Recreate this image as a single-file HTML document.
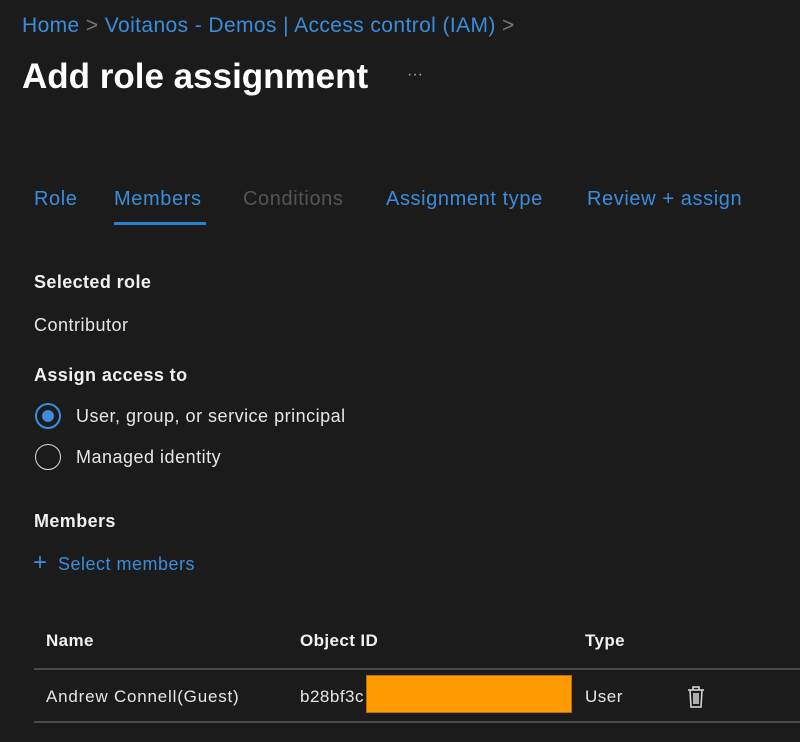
<!DOCTYPE html>
<html><head><style>
body{margin:0;width:800px;height:742px;background:#1b1b1b;font-family:"Liberation Sans",sans-serif;position:relative;overflow:hidden;color:#e6e6e6}
div,span{position:absolute;white-space:nowrap}
.b{color:#3a8ddb}
.h{font-weight:bold;font-size:18px;letter-spacing:0.4px;color:#f0f0f0}
.t{font-size:18px;letter-spacing:0.5px}
.tab{font-size:20px;letter-spacing:0.6px;top:188px}
.line{height:2px;background:#4a4a4a;left:34px;width:766px}
</style></head><body>
<div class="b" style="left:22px;top:14px;font-size:21px;letter-spacing:0.4px">Home <span style="position:static;color:#777">&gt;</span> Voitanos - Demos | Access control (IAM) <span style="position:static;color:#777">&gt;</span></div>
<div style="left:22px;top:57px;font-size:35px;font-weight:bold;color:#fff">Add role assignment</div>
<div style="left:407px;top:66px;font-size:16px;color:#aaa">···</div>
<div class="b tab" style="left:34px">Role</div>
<div class="b tab" style="left:114px">Members</div>
<div style="left:114px;top:222px;width:92px;height:3px;background:#2b7fd0"></div>
<div class="tab" style="left:243px;color:#555">Conditions</div>
<div class="b tab" style="left:386px">Assignment type</div>
<div class="b tab" style="left:587px">Review + assign</div>
<div class="h" style="left:34px;top:272px">Selected role</div>
<div class="t" style="left:34px;top:315px">Contributor</div>
<div class="h" style="left:34px;top:365px">Assign access to</div>
<div style="left:35px;top:403px;width:26px;height:26px;border:2px solid #3a8ddb;border-radius:50%;box-sizing:border-box"></div>
<div style="left:42px;top:410px;width:12px;height:12px;background:#3a8ddb;border-radius:50%"></div>
<div class="t" style="left:76px;top:406px">User, group, or service principal</div>
<div style="left:35px;top:444px;width:26px;height:26px;border:1.5px solid #ddd;border-radius:50%;box-sizing:border-box"></div>
<div class="t" style="left:76px;top:447px">Managed identity</div>
<div class="h" style="left:34px;top:511px">Members</div>
<div class="b" style="left:33px;top:549px;font-size:24px;font-weight:300">+</div>
<div class="b t" style="left:58px;top:554px">Select members</div>
<div class="h" style="left:46px;top:631px;font-size:17px">Name</div>
<div class="h" style="left:300px;top:631px;font-size:17px">Object ID</div>
<div class="h" style="left:585px;top:631px;font-size:17px">Type</div>
<div class="line" style="top:668px"></div>
<div class="t" style="left:46px;top:687px;font-size:17px;letter-spacing:0.8px">Andrew Connell(Guest)</div>
<div class="t" style="left:300px;top:687px;font-size:17px">b28bf3c</div>
<div style="left:366px;top:675px;width:206px;height:38px;background:#ff9a00;border:1px solid #b86e00;box-sizing:border-box"></div>
<div class="t" style="left:585px;top:687px;font-size:17px">User</div>
<svg style="position:absolute;left:686px;top:685px" width="20" height="24" viewBox="0 0 20 24" fill="none" stroke="#ddd" stroke-width="1.5"><path d="M2 5h16M7 5V2h6v3M4 5l1 17h10l1-17M8 8v11M10 8v11M12 8v11"/></svg>
<div class="line" style="top:721px"></div>
</body></html>
